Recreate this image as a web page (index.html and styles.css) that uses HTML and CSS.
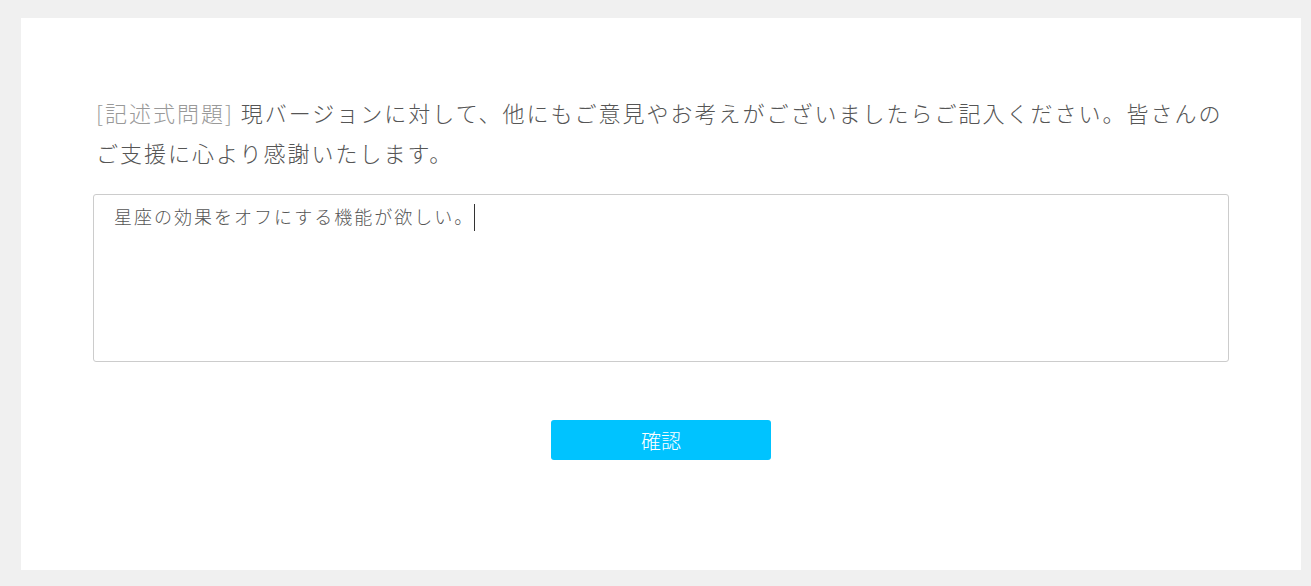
FILE: index.html
```html
<!DOCTYPE html>
<html lang="ja">
<head>
<meta charset="utf-8">
<link rel="stylesheet" href="styles.css">
</head>
<body>
<div class="card">
  <p class="question"><span class="tag">[記述式問題]</span> 現バージョンに対して、他にもご意見やお考えがございましたらご記入ください。皆さんのご支援に心より感謝いたします。</p>
  <div class="answer">星座の効果をオフにする機能が欲しい。<span class="caret"></span></div>
  <div class="actions"><button class="confirm">確認</button></div>
</div>
</body>
</html>
```
FILE: styles.css
```css
html, body {
  margin: 0;
  padding: 0;
  background: #f0f0f0;
  font-family: "Noto Sans CJK JP", "Noto Sans", sans-serif;
}
body {
  padding: 18px 10px 16px 21px;
}
.card {
  width: 1280px;
  height: 552px;
  box-sizing: border-box;
  background: #fff;
  padding: 74px 72px 0 72px;
}
.question {
  margin: 0 -8px 22px 0;
  padding-left: 3px;
  font-size: 22px;
  font-weight: 300;
  line-height: 40px;
  letter-spacing: 2px;
  color: #555;
}
.tag {
  color: #999;
  letter-spacing: 2px;
}
.answer {
  height: 168px;
  box-sizing: border-box;
  border: 1px solid #ccc;
  border-radius: 3px;
  padding: 7px 20px;
  font-size: 18px;
  font-weight: 300;
  line-height: 28px;
  letter-spacing: 2px;
  color: #555;
}
.caret {
  display: inline-block;
  width: 1px;
  height: 27px;
  background: #333;
  vertical-align: -7px;
  margin-left: 0;
}
.actions {
  display: flex;
  justify-content: center;
  padding-top: 58px;
}
.confirm {
  width: 220px;
  height: 40px;
  border: none;
  border-radius: 3px;
  background: #00c3ff;
  color: #fff;
  font-family: "Noto Sans CJK JP", sans-serif;
  font-size: 20px;
  font-weight: 300;
  letter-spacing: 0;
  padding: 0;
}
```
